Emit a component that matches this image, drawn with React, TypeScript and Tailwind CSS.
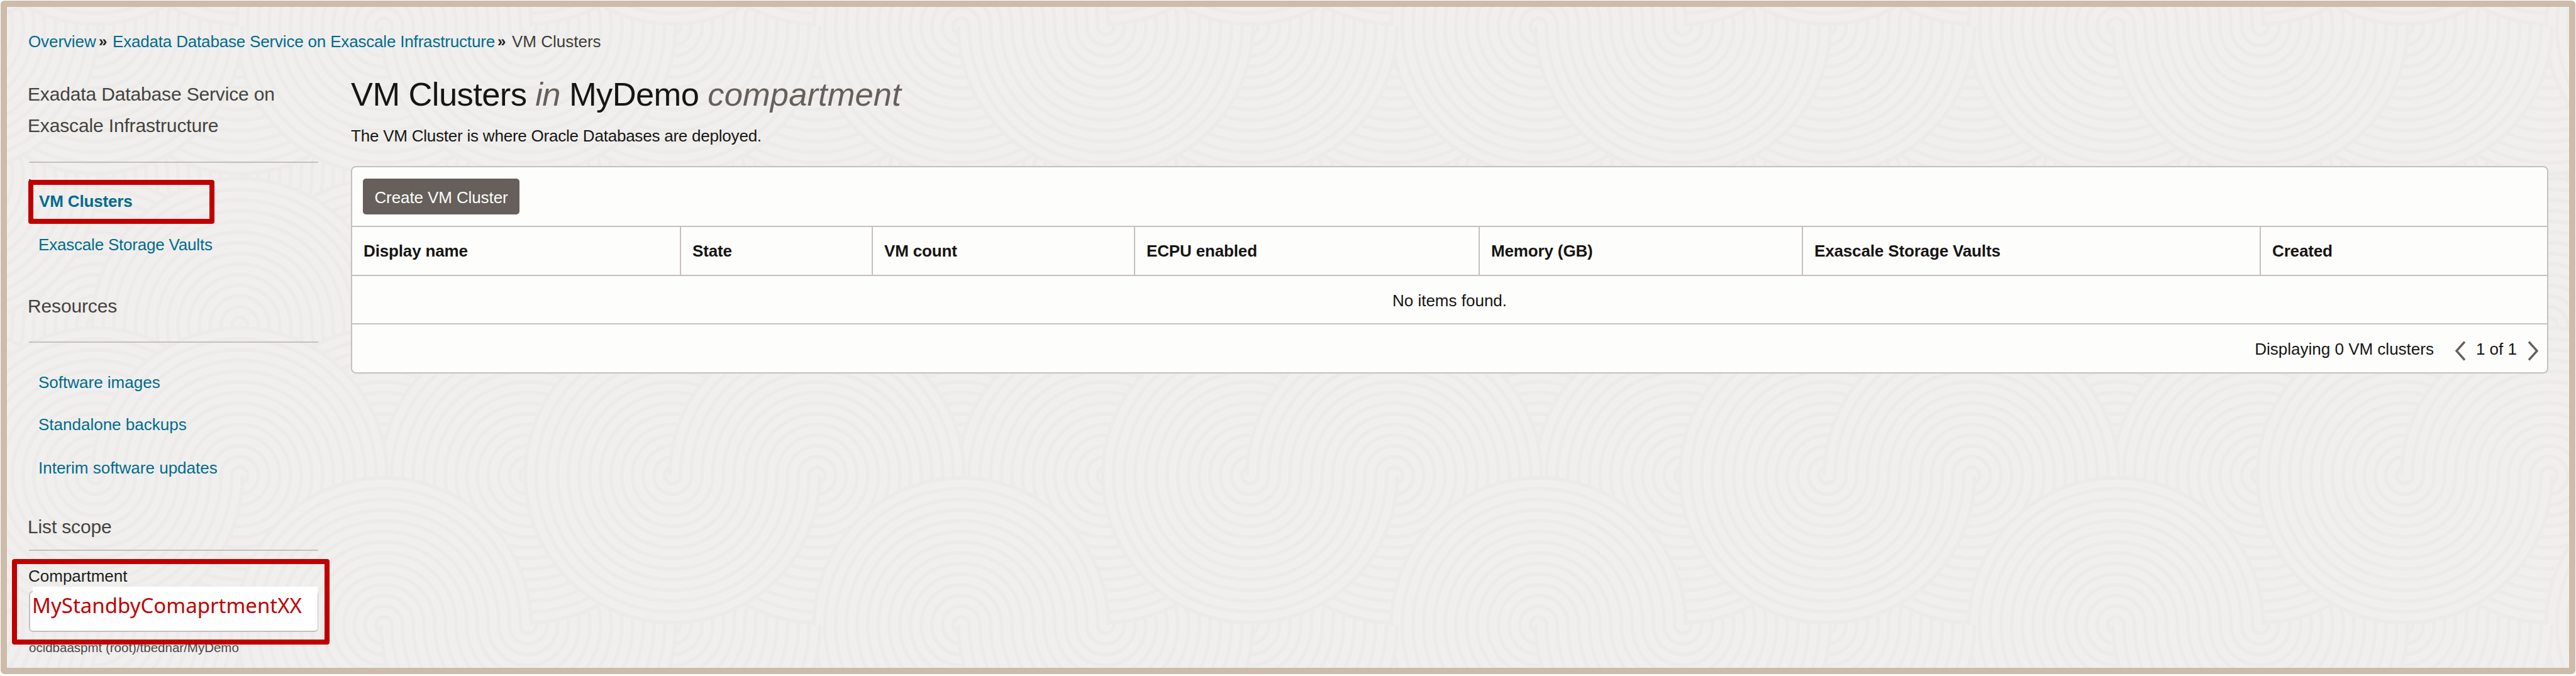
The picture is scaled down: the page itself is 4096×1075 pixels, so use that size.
import type { ReactNode } from "react";

/* Repeating texture of overlapping scales: four columns by four rows of ringed discs. */
const TILE_W = 918;
const BAND_H = 238;
const RINGS = [234, 217, 200, 183, 166, 149, 132, 115, 98, 81, 64, 47, 30, 13];
const A = 151.5;
const B = 381;
const C = 610.5;
const D = 840;
const UP = BAND_H;
const LOW = 0;

/* For every horizontal band, the half discs it shows, from the bottom of the stack to the top. */
const BANDS: [number, number][][] = [
  [[B, UP], [C, UP], [A, UP], [D, UP], [B, LOW], [C, LOW], [A, LOW], [D, LOW]],
  [[A, LOW], [C, LOW], [D, UP], [B, LOW], [A, UP], [C, UP], [D, LOW], [B, UP]],
  [[A, LOW], [D, LOW], [B, LOW], [C, LOW], [C, UP], [D, UP], [A, UP], [B, UP]],
  [[A, UP], [B, UP], [D, UP], [C, LOW], [D, LOW], [B, LOW], [A, LOW], [C, UP]],
];

function Texture() {
  return (
    <svg className="absolute inset-0 h-full w-full" aria-hidden="true">
      <defs>
        <pattern id="rings" width={TILE_W} height={BAND_H * 4} x={-11} y={31} patternUnits="userSpaceOnUse">
          {BANDS.map((discs, band) => (
            <svg key={band} x="0" y={band * BAND_H} width={TILE_W} height={BAND_H} overflow="hidden">
              <rect width={TILE_W} height={BAND_H} fill="#f0efed" />
              {discs.map(([cx, cy]) => (
                <g key={`${cx},${cy}`} fill="#f0efed" stroke="#ecebe9" strokeWidth="5.5">
                  {[-TILE_W, 0, TILE_W].map((dx) =>
                    RINGS.map((r) => <circle key={`${dx},${r}`} cx={cx + dx} cy={cy} r={r} />),
                  )}
                </g>
              ))}
            </svg>
          ))}
        </pattern>
      </defs>
      <rect width="100%" height="100%" fill="url(#rings)" />
    </svg>
  );
}

function NavLink({ children, className }: { children: ReactNode; className: string }) {
  return (
    <a className={`relative ml-[15px] block h-[36px] whitespace-nowrap text-[26px] leading-[35px] text-[#006b8f] ${className}`}>
      {children}
    </a>
  );
}

function SideHeading({ children, className }: { children: ReactNode; className: string }) {
  return (
    <h2 className={`-ml-[2px] whitespace-nowrap text-[30px] leading-[50px] tracking-[-0.15px] text-[#45423f] ${className}`}>
      {children}
    </h2>
  );
}

function Rule({ className }: { className: string }) {
  return <div className={`h-[2px] w-[460px] bg-[#c5c0bc] ${className}`} />;
}

function Sidebar() {
  return (
    <aside className="w-[460px] shrink-0">
      <SideHeading className="mt-[41px]">
        Exadata Database Service on
        <br />
        Exascale Infrastructure
      </SideHeading>
      <Rule className="mt-[32px]" />
      <nav>
        <NavLink className="mt-[44px] font-bold tracking-[-0.15px]">
          <span className="absolute -left-[15px] -top-[18px] h-[50px] w-[3px] bg-[#006b8f]" />
          <span className="absolute -left-[16px] -top-[17px] h-[70px] w-[296px] rounded-[4px] border-[8px] border-[#c00000]" />
          <span className="ml-px">VM Clusters</span>
        </NavLink>
        <NavLink className="mt-[33px] tracking-[-0.2px]">Exascale Storage Vaults</NavLink>
      </nav>
      <SideHeading className="mt-[54px]">Resources</SideHeading>
      <Rule className="mt-[31px]" />
      <nav>
        <NavLink className="mt-[46px]">Software images</NavLink>
        <NavLink className="mt-[31px]">Standalone backups</NavLink>
        <NavLink className="mt-[33px]">Interim software updates</NavLink>
      </nav>
      <SideHeading className="mt-[50px]">List scope</SideHeading>
      <Rule className="mt-[11px]" />
      <div className="relative mt-[22px]">
        <label className="-ml-px block text-[26px] leading-[36px] text-[#201e1c]">Compartment</label>
        <div className="relative mt-[6px] h-[65px] w-[460px] rounded-[6px] border-2 border-[#c5c0bc] bg-[#fdfdfc]">
          <div className="absolute left-[4px] -top-[9px] h-[68px] w-[453px] whitespace-nowrap bg-white font-['Noto_Sans',sans-serif] text-[33px] leading-[59px] text-[#c00000]">
            <span className="-ml-px">MyStandbyComaprtmentXX</span>
          </div>
        </div>
        <p className="mt-[10px] whitespace-nowrap text-[20.5px] leading-[30px] text-[#4a4745]">ocidbaaspmt (root)/tbednar/MyDemo</p>
        <span className="absolute -left-[27px] -top-[9px] h-[136px] w-[505px] rounded-[4px] border-[8px] border-[#c00000]" />
      </div>
    </aside>
  );
}

const COLUMNS = [
  "Display name",
  "State",
  "VM count",
  "ECPU enabled",
  "Memory (GB)",
  "Exascale Storage Vaults",
  "Created",
];

function Chevron({ points }: { points: string }) {
  return (
    <svg width="20" height="34" viewBox="0 0 20 34" fill="none" stroke="#665f5b" strokeWidth="3.4">
      <polyline points={points} />
    </svg>
  );
}

function ClusterTable() {
  return (
    <section className="mt-[30px] w-[3494px] rounded-[8px] border-2 border-[#c5c0bc] bg-[#fdfdfb] text-[26px] leading-[36px] text-[#161513]">
      <div className="flex h-[95px] border-b-2 border-[#c5c0bc] pl-[17px] pt-[18px]">
        <button className="h-[57px] w-[249px] rounded-[5px] bg-[#665f5b] pt-[2px] tracking-[-0.1px] text-[#fdfdfb]">
          Create VM Cluster
        </button>
      </div>
      <div className="grid h-[78px] grid-cols-[523px_305px_417px_548px_514px_728px_1fr] border-b-2 border-[#c5c0bc]">
        {COLUMNS.map((name) => (
          <div
            key={name}
            className="flex items-center border-r-2 border-[#c5c0bc] pl-[18px] font-bold tracking-[-0.15px] last:border-r-0"
          >
            {name}
          </div>
        ))}
      </div>
      <div className="flex h-[77px] items-center justify-center border-b-2 border-[#c5c0bc] pt-[2px]">No items found.</div>
      <div className="flex h-[76px] items-center justify-end pr-[12px] pt-[2px]">
        <span className="mr-[32px]">Displaying 0 VM clusters</span>
        <span className="mt-[5px]">
          <Chevron points="17,2.5 4,17 17,31.5" />
        </span>
        <span className="ml-[15px] mr-[16px]">1 of 1</span>
        <span className="mt-[5px]">
          <Chevron points="3,2.5 16,17 3,31.5" />
        </span>
      </div>
    </section>
  );
}

export default function App() {
  return (
    <div className="h-[1075px] w-[4096px] overflow-hidden bg-white pl-px pt-px font-['Liberation_Sans',Arial,sans-serif]">
      <div className="relative h-[1071px] w-[4094px] overflow-hidden rounded-[6px] border-[10px] border-[#cdbbab] bg-[#f0efed]">
        <Texture />
        <div className="relative pl-[35px] pt-[37px]">
          <div className="-ml-px flex h-[36px] whitespace-nowrap text-[26px] leading-[36px]">
            <a className="w-[112px] tracking-[-0.1px] text-[#006b8f]">Overview</a>
            <span className="w-[22px] text-[24px] font-bold text-[#201e1c]">»</span>
            <a className="w-[612px] tracking-[-0.18px] text-[#006b8f]">Exadata Database Service on Exascale Infrastructure</a>
            <span className="w-[23px] text-[24px] font-bold text-[#201e1c]">»</span>
            <span className="text-[#403c39]">VM Clusters</span>
          </div>
          <div className="flex gap-[52px]">
            <Sidebar />
            <main className="w-[3494px]">
              <h1 className="mt-[31px] whitespace-nowrap text-[52.5px] leading-[70px] tracking-[-0.6px] text-[#161513]">
                VM Clusters <em className="text-[#665f5b]">in</em> MyDemo{" "}
                <em className="tracking-[0.1px] text-[#665f5b]">compartment</em>
              </h1>
              <p className="mt-[14px] text-[26px] leading-[35px] tracking-[-0.22px] text-[#161513]">
                The VM Cluster is where Oracle Databases are deployed.
              </p>
              <ClusterTable />
            </main>
          </div>
        </div>
      </div>
    </div>
  );
}
